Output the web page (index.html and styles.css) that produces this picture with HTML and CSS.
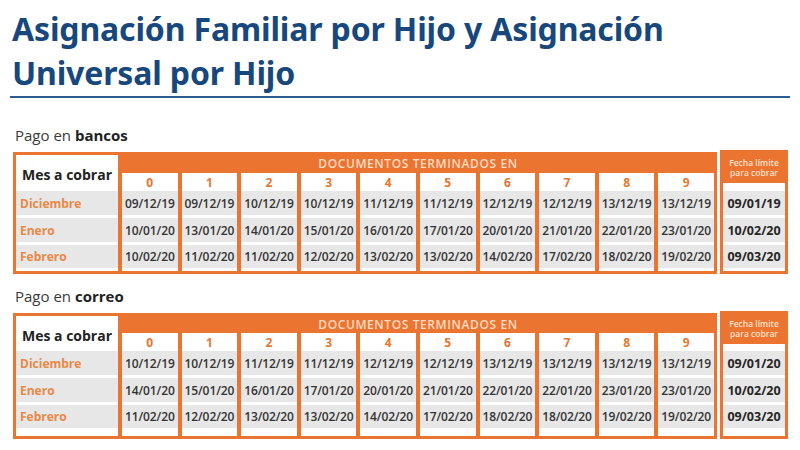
FILE: index.html
```html
<!DOCTYPE html>
<html lang="es">
<head>
<meta charset="utf-8">
<title>Asignación Familiar por Hijo y Asignación Universal por Hijo</title>
<link rel="stylesheet" href="styles.css">
</head>
<body>
<div class="page">
  <h1 class="title">Asignación Familiar por Hijo y Asignación<br>Universal por Hijo</h1>

  <section class="block block-bancos">
    <p class="label">Pago en <b>bancos</b></p>
    <div class="sched">
      <div class="grid">
        <div class="mes">Mes a cobrar</div>
        <div class="docs">DOCUMENTOS TERMINADOS EN</div>
        <div class="row nums">
          <div>0</div><div>1</div><div>2</div><div>3</div><div>4</div><div>5</div><div>6</div><div>7</div><div>8</div><div>9</div>
        </div>
        <div class="row data first">
          <div class="month">Diciembre</div>
          <div>09/12/19</div><div>09/12/19</div><div>10/12/19</div><div>10/12/19</div><div>11/12/19</div><div>11/12/19</div><div>12/12/19</div><div>12/12/19</div><div>13/12/19</div><div>13/12/19</div>
        </div>
        <div class="row data">
          <div class="month">Enero</div>
          <div>10/01/20</div><div>13/01/20</div><div>14/01/20</div><div>15/01/20</div><div>16/01/20</div><div>17/01/20</div><div>20/01/20</div><div>21/01/20</div><div>22/01/20</div><div>23/01/20</div>
        </div>
        <div class="row data last">
          <div class="month">Febrero</div>
          <div>10/02/20</div><div>11/02/20</div><div>11/02/20</div><div>12/02/20</div><div>13/02/20</div><div>13/02/20</div><div>14/02/20</div><div>17/02/20</div><div>18/02/20</div><div>19/02/20</div>
        </div>
      </div>
      <div class="fecha">
        <div class="fhead">Fecha límite<br>para cobrar</div>
        <div class="fbody">
          <div class="fd">09/01/19</div>
          <div class="fd">10/02/20</div>
          <div class="fd last">09/03/20</div>
        </div>
      </div>
    </div>
  </section>

  <section class="block block-correo">
    <p class="label">Pago en <b>correo</b></p>
    <div class="sched">
      <div class="grid">
        <div class="mes">Mes a cobrar</div>
        <div class="docs">DOCUMENTOS TERMINADOS EN</div>
        <div class="row nums">
          <div>0</div><div>1</div><div>2</div><div>3</div><div>4</div><div>5</div><div>6</div><div>7</div><div>8</div><div>9</div>
        </div>
        <div class="row data first">
          <div class="month">Diciembre</div>
          <div>10/12/19</div><div>10/12/19</div><div>11/12/19</div><div>11/12/19</div><div>12/12/19</div><div>12/12/19</div><div>13/12/19</div><div>13/12/19</div><div>13/12/19</div><div>13/12/19</div>
        </div>
        <div class="row data">
          <div class="month">Enero</div>
          <div>14/01/20</div><div>15/01/20</div><div>16/01/20</div><div>17/01/20</div><div>20/01/20</div><div>21/01/20</div><div>22/01/20</div><div>22/01/20</div><div>23/01/20</div><div>23/01/20</div>
        </div>
        <div class="row data last">
          <div class="month">Febrero</div>
          <div>11/02/20</div><div>12/02/20</div><div>13/02/20</div><div>13/02/20</div><div>14/02/20</div><div>17/02/20</div><div>18/02/20</div><div>18/02/20</div><div>19/02/20</div><div>19/02/20</div>
        </div>
      </div>
      <div class="fecha">
        <div class="fhead">Fecha límite<br>para cobrar</div>
        <div class="fbody">
          <div class="fd">09/01/20</div>
          <div class="fd">10/02/20</div>
          <div class="fd last">09/03/20</div>
        </div>
      </div>
    </div>
  </section>
</div>
</body>
</html>
```

FILE: styles.css
```css
* { box-sizing: border-box; }

html, body {
  margin: 0;
  padding: 0;
  background: #ffffff;
}

.page {
  width: 800px;
  height: 450px;
  padding: 7px 10px 0 10px;
  font-family: "Open Sans", "Noto Sans", sans-serif;
  overflow: hidden;
}

.title {
  margin: 0;
  padding: 0 0 1px 2px;
  font-family: "Noto Sans", "Open Sans", sans-serif;
  font-weight: 700;
  font-size: 32px;
  line-height: 44px;
  color: #17487d;
  letter-spacing: -0.15px;
  border-bottom: 2px solid #2d5c8f;
}

.block {
  padding-left: 3px;
}

.label {
  margin: 0;
  padding-left: 2px;
  font-size: 15px;
  line-height: 20px;
  color: #3a3a3a;
}
.label b {
  font-weight: 700;
  color: #222;
}

.block-bancos .label { margin-top: 27px; }
.block-correo .label { margin-top: 12px; }

.sched {
  display: flex;
  align-items: stretch;
  gap: 3px;
  margin-top: 7px;
}

.grid {
  width: 704px;
  background: #ec7431;
  padding: 3px;
  display: grid;
  grid-template-columns: 102px repeat(10, 1fr);
  grid-template-rows: 18px 18px 24px 27px 29px;
  column-gap: 4px;
}

.row { display: contents; }

.mes {
  grid-column: 1;
  grid-row: 1 / 3;
  background: #fff;
  display: flex;
  align-items: center;
  justify-content: center;
  font-weight: 700;
  font-size: 14px;
  color: #222;
  padding-top: 3px;
}

.docs {
  grid-column: 2 / -1;
  grid-row: 1;
  text-align: center;
  color: #fcdcc2;
  font-weight: 600;
  font-size: 12px;
  line-height: 18px;
  letter-spacing: 0.6px;
}

.nums > div {
  grid-row: 2;
  background: #fff;
  text-align: center;
  color: #e9762f;
  font-weight: 700;
  font-size: 12px;
  line-height: 19px;
}
.nums > div:first-child { grid-column: 2; }

.data > div {
  background: #e7e7e7;
  color: #333;
  font-weight: 600;
  font-size: 12px;
  letter-spacing: -0.1px;
  display: flex;
  align-items: center;
  justify-content: center;
}
.data:not(.first) > div {
  border-top: 3px solid #fff;
}
.data.last > div {
  border-bottom: 3px solid #fff;
}
.data > .month {
  justify-content: flex-start;
  padding-left: 4px;
  color: #e98746;
  font-weight: 700;
  letter-spacing: 0;
}

.fecha {
  width: 68px;
  background: #ec7431;
  padding: 3px;
  display: flex;
  flex-direction: column;
  margin-top: -2px;
}
.fhead {
  height: 30px;
  color: #fde3cf;
  font-size: 8.5px;
  line-height: 10px;
  font-weight: 600;
  text-align: center;
  display: flex;
  align-items: center;
  justify-content: center;
}
.fbody {
  flex: 1;
  background: #fff;
  padding-top: 8px;
  display: flex;
  flex-direction: column;
}
.fd {
  height: 24px;
  background: #e7e7e7;
  display: flex;
  align-items: center;
  justify-content: center;
  font-weight: 700;
  font-size: 12.5px;
  color: #262626;
}
.fd + .fd { margin-top: 3px; }
.fd.last { height: 23px; }

.block-correo .grid {
  grid-template-rows: 17px 18px 24px 27px 34px;
}
.block-correo .data.last > div { border-bottom-width: 8px; }
.block-correo .fbody { padding-top: 7px; }
```
